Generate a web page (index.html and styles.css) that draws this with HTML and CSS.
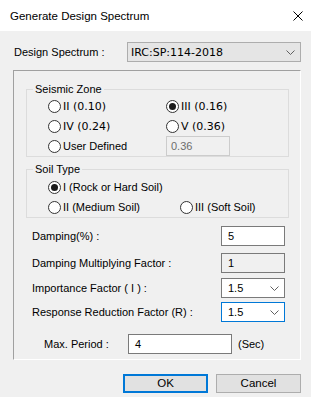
FILE: index.html
```html
<!DOCTYPE html>
<html lang="en">
<head>
    <meta charset="UTF-8">
    <title>Generate Design Spectrum</title>
    <link rel="stylesheet" href="styles.css">
</head>
<body>
    <div class="dialog">
        <div class="titlebar">
            <span class="title">Generate Design Spectrum</span>
            <svg class="close" viewBox="0 0 10 10" width="10" height="10">
                <path d="M0.5 0.5 L9.5 9.5 M9.5 0.5 L0.5 9.5" stroke="#000" stroke-width="1"></path>
            </svg>
        </div>

        <div class="content">
            <div class="spectrum-row">
                <span class="label">Design Spectrum :</span>
                <div class="combo combo-flat">
                    <span class="tahoma">IRC:SP:114-2018</span>
                    <svg class="chevron" viewBox="0 0 9 5" width="9" height="5"><path d="M0.5 0.5 L4.5 4.5 L8.5 0.5" fill="none" stroke="#606060"></path></svg>
                </div>
            </div>

            <div class="panel">
                <div class="group group-seismic">
                    <span class="legend">Seismic Zone</span>
                    <div class="radio-grid">
                        <label class="radio"><span class="dot"></span><span class="tahoma">II (0.10)</span></label>
                        <label class="radio"><span class="dot checked"></span><span class="tahoma">III (0.16)</span></label>
                        <label class="radio"><span class="dot"></span><span class="tahoma">IV (0.24)</span></label>
                        <label class="radio"><span class="dot"></span><span class="tahoma">V (0.36)</span></label>
                        <label class="radio"><span class="dot"></span><span class="label">User Defined</span></label>
                        <div class="field field-disabled">0.36</div>
                    </div>
                </div>

                <div class="group group-soil">
                    <span class="legend">Soil Type</span>
                    <div class="soil-rows">
                        <label class="radio"><span class="dot checked"></span><span class="label">I (Rock or Hard Soil)</span></label>
                        <div class="soil-pair">
                            <label class="radio"><span class="dot"></span><span class="label">II (Medium Soil)</span></label>
                            <label class="radio"><span class="dot"></span><span class="label">III (Soft Soil)</span></label>
                        </div>
                    </div>
                </div>

                <div class="form-row row-damping">
                    <span class="label">Damping(%) :</span>
                    <div class="field">5</div>
                </div>
                <div class="form-row row-dmf">
                    <span class="label">Damping Multiplying Factor :</span>
                    <div class="field field-readonly">1</div>
                </div>
                <div class="form-row row-importance">
                    <span class="label">Importance Factor ( I ) :</span>
                    <div class="field combo">
                        <span>1.5</span>
                        <svg class="chevron" viewBox="0 0 9 5" width="9" height="5"><path d="M0.5 0.5 L4.5 4.5 L8.5 0.5" fill="none" stroke="#606060"></path></svg>
                    </div>
                </div>
                <div class="form-row row-response">
                    <span class="label">Response Reduction Factor (R) :</span>
                    <div class="field combo focused">
                        <span>1.5</span>
                        <svg class="chevron" viewBox="0 0 9 5" width="9" height="5"><path d="M0.5 0.5 L4.5 4.5 L8.5 0.5" fill="none" stroke="#606060"></path></svg>
                    </div>
                </div>

                <div class="period-row">
                    <span class="label period-label">Max. Period :</span>
                    <div class="field period-field">4</div>
                    <span class="label">(Sec)</span>
                </div>
            </div>

            <div class="buttons">
                <button class="btn btn-default">OK</button>
                <button class="btn">Cancel</button>
            </div>
        </div>
    </div>
</body>
</html>
```

FILE: styles.css
```css
/* General Styles */
body {
    margin: 0;
    padding: 0;
    background: #f0f0f0;
    font-family: 'Liberation Sans', Arial, sans-serif;
    font-size: 11px;
    color: #000000;
}

.dialog {
    width: 311px;
    height: 397px;
    overflow: hidden;
}

.titlebar {
    height: 31px;
    background: #ffffff;
    display: flex;
    align-items: center;
    justify-content: space-between;
    padding: 0 8px 0 10px;
    box-sizing: border-box;
}

.title {
    font-size: 11.5px;
}

.close {
    margin-top: 1px;
}

.content {
    padding: 11px 10px 0 13px;
}

.tahoma {
    font-family: 'DejaVu Sans', sans-serif;
    font-size: 11px;
}

/* Top combo */
.spectrum-row {
    display: flex;
    align-items: center;
    height: 20px;
    padding-left: 1px;
}

.spectrum-row .label {
    width: 113px;
}

.combo {
    display: flex;
    align-items: center;
    justify-content: space-between;
}

.combo-flat {
    width: 174px;
    height: 20px;
    box-sizing: border-box;
    border: 1px solid #adadad;
    background: #e5e5e5;
    padding: 0 5px 0 3px;
}

.chevron {
    flex: none;
}

/* Sunken panel */
.panel {
    margin-top: 8px;
    width: 288px;
    box-sizing: border-box;
    border-top: 1px solid #a0a0a0;
    border-left: 1px solid #a0a0a0;
    border-right: 1px solid #ffffff;
    border-bottom: 1px solid #ffffff;
    padding: 18px 11px 5px 12px;
}

.group {
    position: relative;
    border: 1px solid #dcdcdc;
    width: 263px;
    box-sizing: border-box;
}

.legend {
    position: absolute;
    top: -8px;
    left: 6px;
    padding: 0 2px;
    background: #f0f0f0;
    line-height: 14px;
}

.group-seismic {
    padding: 6px 0 0 21px;
}

.radio-grid {
    display: grid;
    grid-template-columns: 118px 64px;
    grid-auto-rows: 20px;
    align-items: center;
}

.radio {
    display: flex;
    align-items: center;
    gap: 2px;
    white-space: nowrap;
}

.dot {
    width: 13px;
    height: 13px;
    box-sizing: border-box;
    border: 1px solid #333333;
    border-radius: 50%;
    background: #ffffff;
    display: flex;
    align-items: center;
    justify-content: center;
    flex: none;
}

.dot.checked::after {
    content: "";
    width: 7px;
    height: 7px;
    border-radius: 50%;
    background: #1a1a1a;
}

.field {
    height: 20px;
    box-sizing: border-box;
    border: 1px solid #7a7a7a;
    background: #ffffff;
    padding: 0 6px;
    display: flex;
    align-items: center;
    font-size: 11px;
}

.field-disabled {
    border-color: #cccccc;
    background: #f0f0f0;
    color: #6d6d6d;
    padding-left: 4px;
}

.field-readonly {
    background: #f0f0f0;
}

.group-soil {
    margin-top: 12px;
    padding: 7px 0 0 21px;
    height: 49px;
}

.soil-rows {
    display: flex;
    flex-direction: column;
}

.soil-rows .radio,
.soil-pair {
    height: 20px;
}

.soil-pair {
    display: flex;
    align-items: center;
}

.soil-pair .radio:first-child {
    width: 132px;
}

/* Label + input rows */
.form-row {
    display: flex;
    align-items: center;
    justify-content: space-between;
    box-sizing: border-box;
    padding-left: 6px;
    width: 259px;
}

.form-row .field {
    width: 64px;
}

.row-damping { margin-top: 8px; }
.row-dmf { margin-top: 7px; }
.row-importance { margin-top: 5px; }
.row-response { margin-top: 4px; }

.combo.field {
    padding-right: 5px;
    justify-content: space-between;
}

.focused {
    border-color: #0078d7;
}

.period-row {
    display: flex;
    align-items: center;
    margin-top: 12px;
    padding-left: 18px;
}

.period-label {
    width: 84px;
}

.period-field {
    width: 104px;
    margin-right: 6px;
}

/* Buttons */
.buttons {
    display: flex;
    justify-content: flex-end;
    gap: 8px;
    margin-top: 14px;
    width: 288px;
}

.btn {
    width: 85px;
    height: 19px;
    box-sizing: border-box;
    border: 1px solid #adadad;
    background: #e1e1e1;
    font-family: 'Liberation Sans', Arial, sans-serif;
    font-size: 11.5px;
    padding: 0;
    line-height: 15px;
}

.btn-default {
    border: 2px solid #0078d7;
}
```
